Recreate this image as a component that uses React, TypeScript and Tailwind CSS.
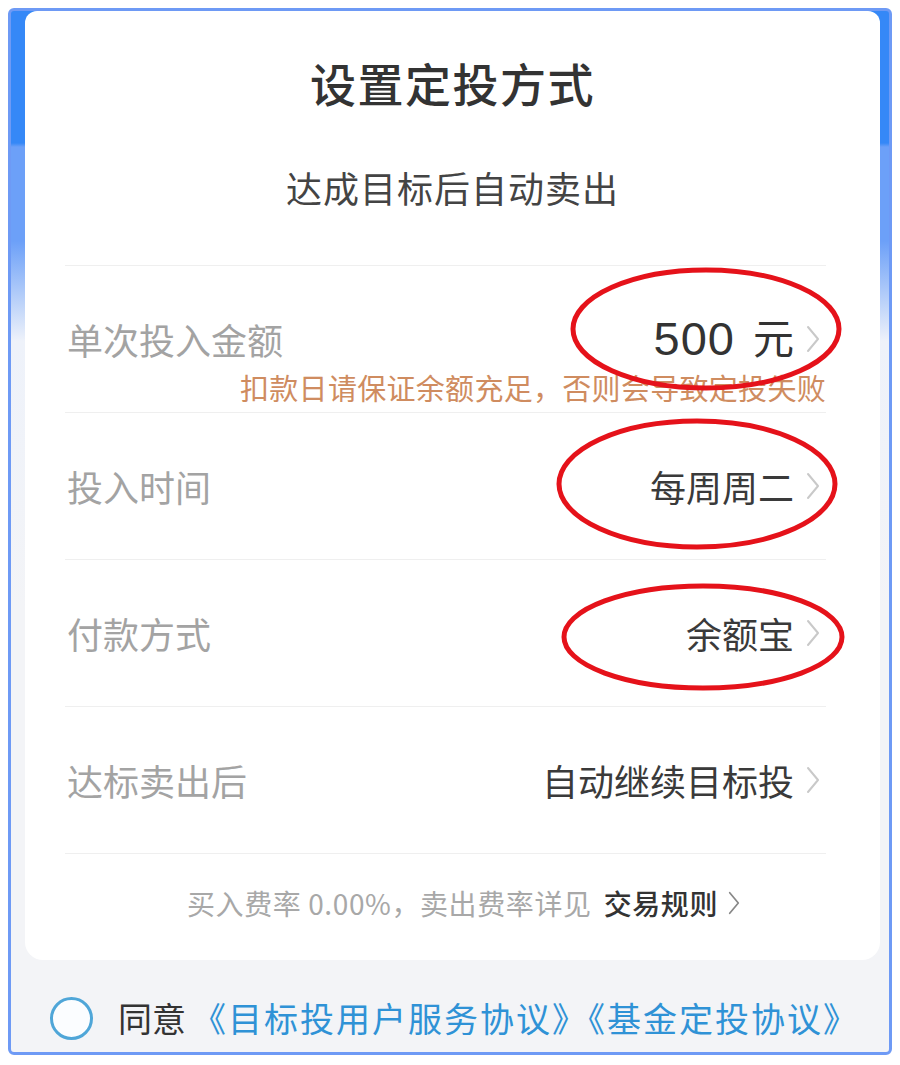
import React from "react";

const FONT = { fontFamily: '"Noto Sans CJK SC", "Noto Sans", sans-serif' };

const Chevron: React.FC<{ className?: string }> = ({ className }) => (
  <svg viewBox="0 0 14 28" className={className} fill="none">
    <path d="M2 2 L12 14 L2 26" stroke="currentColor" strokeWidth="2" strokeLinecap="round" strokeLinejoin="round" />
  </svg>
);

type Row = { label: string; value: string; unit?: string; note?: string };

const rows: Row[] = [
  { label: "单次投入金额", value: "500", unit: "元", note: "扣款日请保证余额充足，否则会导致定投失败" },
  { label: "投入时间", value: "每周周二" },
  { label: "付款方式", value: "余额宝" },
  { label: "达标卖出后", value: "自动继续目标投" },
];

const SettingRow: React.FC<{ row: Row }> = ({ row }) => {
  const main = (
    <div className="flex items-center justify-between h-[46px]">
      <span className="text-[36px] text-[#a3a3a3] leading-none pl-[2px]">{row.label}</span>
      <div className="flex items-center gap-[12px]">
        {row.unit ? (
          <span className="flex items-center text-[#333] h-[46px]">
            <span className="text-[47px] leading-[46px] tracking-[1px] font-['Liberation_Sans',sans-serif]">{row.value}</span>
            <span className="text-[41px] leading-[40px] ml-[18px] -translate-y-[3px]">{row.unit}</span>
          </span>
        ) : (
          <span className="text-[36px] text-[#3a3a3a] leading-none">{row.value}</span>
        )}
        <Chevron className="w-[14px] h-[28px] text-[#c9c9c9] mr-[6px]" />
      </div>
    </div>
  );

  if (row.note) {
    return (
      <div className="h-[146px] pt-[50px]">
        {main}
        <div className="mt-[10px] h-[30px] flex items-center justify-end">
          <span className="text-[29px] leading-[30px] text-[#cf8c60] tracking-[0.3px]">{row.note}</span>
        </div>
      </div>
    );
  }

  return <div className="h-[146px] flex flex-col justify-center">{main}</div>;
};

export default function App() {
  return (
    <div className="relative w-[900px] h-[1065px] bg-white pt-[8px] px-[8px]" style={FONT}>
      <div className="h-[1047px] border-[3px] border-[#6e9af5] rounded-[6px] overflow-hidden flex flex-col bg-[linear-gradient(to_bottom,#3588f7_0px,#3588f7_132px,#6ca0f8_136px,#6ca0f8_230px,#eef2fa_330px,#f3f4f7_600px)]">
        {/* white sheet */}
        <div className="ml-[14px] mr-[9px] h-[949px] bg-white rounded-t-[12px] rounded-b-[18px] flex flex-col">
          <div className="mt-[41px] h-[60px] flex items-center justify-center">
            <span className="text-[46px] font-medium text-[#333] leading-none tracking-[1.5px]">设置定投方式</span>
          </div>
          <div className="mt-[50px] h-[50px] flex items-center justify-center">
            <span className="text-[36px] text-[#444] leading-none tracking-[1px]">达成目标后自动卖出</span>
          </div>

          <div className="mt-[53px] pl-[40px] pr-[54px]">
            <div className="h-px bg-[#efefef]" />
            {rows.map((r) => (
              <React.Fragment key={r.label}>
                <SettingRow row={r} />
                <div className="h-px bg-[#efefef]" />
              </React.Fragment>
            ))}
          </div>

          <div className="mt-[29px] h-[40px] flex items-center justify-center pl-[22px]">
            <span className="text-[28px] text-[#a8a8a8] leading-none tracking-[0.6px]">买入费率 0.00%，卖出费率详见</span>
            <span className="text-[28px] text-[#333] font-medium leading-none ml-[12px] tracking-[0.6px]">交易规则</span>
            <Chevron className="w-[12px] h-[24px] text-[#888] ml-[10px]" />
          </div>
        </div>

        {/* agreement */}
        <div className="mt-[36px] h-[44px] flex items-center pl-[39px]">
          <div className="w-[43px] h-[43px] rounded-full border-[3px] border-[#4fa6d8] bg-[#fbfdff]" />
          <span className="ml-[25px] text-[34px] text-[#333] leading-none">同意</span>
          <span className="ml-[6px] text-[34px] text-[#2f92d6] leading-none tracking-[2px]">《目标投用户服务协议》《基金定投协议》</span>
        </div>
      </div>

      {/* red annotation marks */}
      <svg className="absolute inset-0 pointer-events-none" width="900" height="1065" viewBox="0 0 900 1065">
        <ellipse cx="706" cy="329" rx="133" ry="59" fill="none" stroke="#e5121a" strokeWidth="5" />
        <ellipse cx="697" cy="484" rx="138" ry="63" fill="none" stroke="#e5121a" strokeWidth="5" />
        <ellipse cx="703" cy="637" rx="139" ry="51" fill="none" stroke="#e5121a" strokeWidth="5" />
      </svg>
    </div>
  );
}
